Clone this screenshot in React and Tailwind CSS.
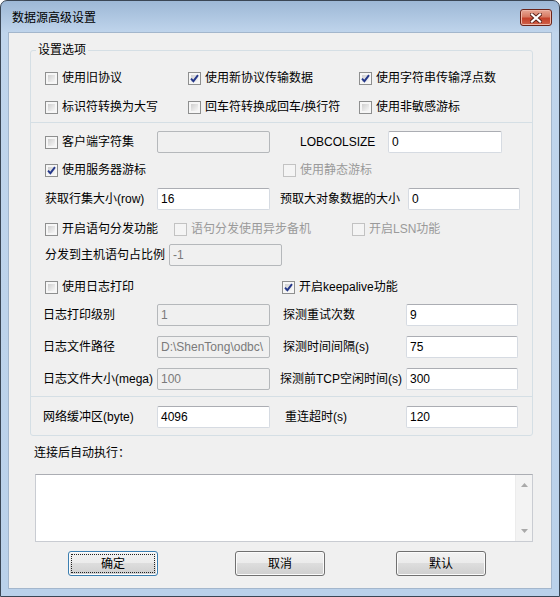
import React from "react";

// Win7 style checkbox with label
function Cb({ label, checked, disabled, className = "" }) {
    return (
        <div className={`flex items-center h-[16px] whitespace-nowrap ${className}`}>
            <span
                className={`relative flex w-[13px] h-[13px] shrink-0 p-[2px] border ${
                    disabled ? "border-[#c2c2c2] bg-[#f4f4f4]" : "border-[#8e8f8f] bg-[#f6f6f6]"
                }`}
            >
                <span
                    className={`block w-full h-full ${
                        disabled ? "bg-[#f4f4f4]" : "bg-[linear-gradient(135deg,#cfcfcf,#f7f7f7)]"
                    }`}
                ></span>
                {checked && (
                    <svg className="absolute left-[1px] top-[1px]" width="9" height="9" viewBox="0 0 9 9">
                        <path d="M1 4.6 L3.4 7.2 L8 1.2" fill="none" stroke="#24378a" strokeWidth="1.9" />
                    </svg>
                )}
            </span>
            <span className={`ml-[4px] ${disabled ? "text-[#9a9a9a]" : ""}`}>{label}</span>
        </div>
    );
}

function Edit({ value, disabled, className = "" }) {
    return (
        <div
            className={`flex items-center h-[22px] shrink-0 pl-[3px] rounded-[2px] border whitespace-nowrap overflow-hidden ${
                disabled
                    ? "border-[#b5b8bb] bg-[#f0f0f0] text-[#7a7a7a]"
                    : "border-[#d6dbe2] border-t-[#abadb3] bg-white"
            } ${className}`}
        >
            {value}
        </div>
    );
}

function Btn({ children, focused }) {
    return (
        <div
            className={`flex w-[90px] h-[25px] rounded-[3px] border p-[2px] bg-[linear-gradient(#f2f2f2_0%,#ebebeb_50%,#dddddd_50%,#cfcfcf_100%)] shadow-[inset_0_0_0_1px_#fbfbfb] ${
                focused ? "border-[#3c7fb1]" : "border-[#707070]"
            }`}
        >
            <div
                className={`flex flex-1 items-center justify-center border ${
                    focused ? "border-dotted border-[#222]" : "border-transparent"
                }`}
            >
                {children}
            </div>
        </div>
    );
}

function CloseButton() {
    return (
        <div className="flex items-center justify-center w-[32px] h-[17px] rounded-[3px] border border-[#6b2419] bg-[linear-gradient(#e7a795_0%,#d77a63_45%,#c4412a_55%,#d0624a_100%)] shadow-[inset_0_0_0_1px_#eeb6a8]">
            <svg width="12" height="10" viewBox="0 0 12 10">
                <path d="M2 1.5 L10 8.5 M10 1.5 L2 8.5" stroke="#5b2018" strokeWidth="4" strokeLinecap="square" />
                <path d="M2 1.5 L10 8.5 M10 1.5 L2 8.5" stroke="#ffffff" strokeWidth="2.2" strokeLinecap="square" />
            </svg>
        </div>
    );
}

export default function App() {
    return (
        <div className="w-[560px] h-[597px] bg-white">
            <div className="flex flex-col w-[560px] h-[597px] rounded-t-[7px] border border-[#3a4655] bg-[linear-gradient(180deg,#9db8d6_0px,#c0d5ec_32px,#bad1ea_100%)] font-['Liberation_Sans','Noto_Sans_CJK_SC',sans-serif] text-[12px] leading-[14px] text-black">
                {/* title bar */}
                <div className="flex items-center h-[31px] pl-[11px] pr-[7px] pt-[2px]">
                    <span className="flex-1">数据源高级设置</span>
                    <CloseButton />
                </div>

                {/* client area */}
                <div className="flex flex-col flex-1 mx-[7px] mb-[7px] border border-[#a3b6cc] bg-[#f0f0f0]">
                    <fieldset className="ml-[21px] mt-[10px] w-[503px] rounded-[3px] border border-[#d5dfe5]">
                        <legend className="ml-[5px] px-[2px] leading-[14px]">设置选项</legend>

                        {/* protocol options */}
                        <div className="flex flex-col pt-[13px] pb-[7px] pl-[12px]">
                            <div className="flex">
                                <Cb label="使用旧协议" className="w-[145px] pl-[2px]" />
                                <Cb label="使用新协议传输数据" checked className="w-[171px]" />
                                <Cb label="使用字符串传输浮点数" checked />
                            </div>
                            <div className="flex mt-[13px]">
                                <Cb label="标识符转换为大写" className="w-[145px] pl-[2px]" />
                                <Cb label="回车符转换成回车/换行符" className="w-[171px]" />
                                <Cb label="使用非敏感游标" />
                            </div>
                        </div>

                        {/* cursor / log options */}
                        <div className="flex flex-col border-t border-[#d5dfe5] pl-[12px] pb-[6px]">
                            <div className="flex items-center mt-[8px]">
                                <Cb label="客户端字符集" className="w-[114px] pl-[2px]" />
                                <Edit disabled value="" className="w-[113px]" />
                                <span className="w-[88px] ml-[30px]">LOBCOLSIZE</span>
                                <Edit value="0" className="w-[114px]" />
                            </div>
                            <div className="flex mt-[9px]">
                                <Cb label="使用服务器游标" checked className="w-[240px] pl-[2px]" />
                                <Cb label="使用静态游标" disabled />
                            </div>
                            <div className="flex items-center mt-[10px]">
                                <span className="w-[114px] pl-[2px] whitespace-nowrap">获取行集大小(row)</span>
                                <Edit value="16" className="w-[113px]" />
                                <span className="w-[128px] ml-[10px] whitespace-nowrap">预取大对象数据的大小</span>
                                <Edit value="0" className="w-[112px]" />
                            </div>
                            <div className="flex mt-[11px]">
                                <Cb label="开启语句分发功能" className="w-[131px] pl-[2px]" />
                                <Cb label="语句分发使用异步备机" disabled className="w-[178px]" />
                                <Cb label="开启LSN功能" disabled />
                            </div>
                            <div className="flex items-center mt-[7px]">
                                <span className="w-[126px] pl-[2px] whitespace-nowrap">分发到主机语句占比例</span>
                                <Edit disabled value="-1" className="w-[113px]" />
                            </div>
                            <div className="flex mt-[13px]">
                                <Cb label="使用日志打印" className="w-[239px] pl-[2px]" />
                                <Cb label="开启keepalive功能" checked />
                            </div>
                            <div className="flex items-center mt-[9px]">
                                <span className="w-[114px] whitespace-nowrap">日志打印级别</span>
                                <Edit disabled value="1" className="w-[113px]" />
                                <span className="w-[123px] ml-[13px] whitespace-nowrap">探测重试次数</span>
                                <Edit value="9" className="w-[112px]" />
                            </div>
                            <div className="flex items-center mt-[10px]">
                                <span className="w-[114px] whitespace-nowrap">日志文件路径</span>
                                <Edit disabled value="D:\ShenTong\odbc\" className="w-[113px]" />
                                <span className="w-[123px] ml-[13px] whitespace-nowrap">探测时间间隔(s)</span>
                                <Edit value="75" className="w-[112px]" />
                            </div>
                            <div className="flex items-center mt-[10px]">
                                <span className="w-[114px] whitespace-nowrap">日志文件大小(mega)</span>
                                <Edit disabled value="100" className="w-[113px]" />
                                <span className="w-[126px] ml-[10px] whitespace-nowrap">探测前TCP空闲时间(s)</span>
                                <Edit value="300" className="w-[112px]" />
                            </div>
                        </div>

                        {/* network */}
                        <div className="flex items-center border-t border-[#d5dfe5] pl-[12px] pt-[9px] pb-[7px]">
                            <span className="w-[114px] whitespace-nowrap">网络缓冲区(byte)</span>
                            <Edit value="4096" className="w-[113px]" />
                            <span className="w-[121px] ml-[15px] whitespace-nowrap">重连超时(s)</span>
                            <Edit value="120" className="w-[112px]" />
                        </div>
                    </fieldset>

                    <div className="ml-[25px] mt-[10px]">连接后自动执行：</div>

                    <div className="flex ml-[26px] mt-[14px] w-[498px] h-[68px] border border-[#c9ccd2] border-t-[#abadb3] bg-white">
                        <div className="flex-1"></div>
                        <div className="flex flex-col justify-between items-center w-[17px] py-[8px] bg-[#f3f3f3] border-l border-[#ececec]">
                            <svg width="7" height="4" viewBox="0 0 7 4">
                                <path d="M0 4 L3.5 0 L7 4 Z" fill="#a9a9a9" />
                            </svg>
                            <svg width="7" height="4" viewBox="0 0 7 4">
                                <path d="M0 0 L3.5 4 L7 0 Z" fill="#a9a9a9" />
                            </svg>
                        </div>
                    </div>

                    <div className="flex mt-[9px] ml-[59px]">
                        <Btn focused>确定</Btn>
                        <div className="ml-[77px]">
                            <Btn>取消</Btn>
                        </div>
                        <div className="ml-[71px]">
                            <Btn>默认</Btn>
                        </div>
                    </div>
                </div>
            </div>
        </div>
    );
}
